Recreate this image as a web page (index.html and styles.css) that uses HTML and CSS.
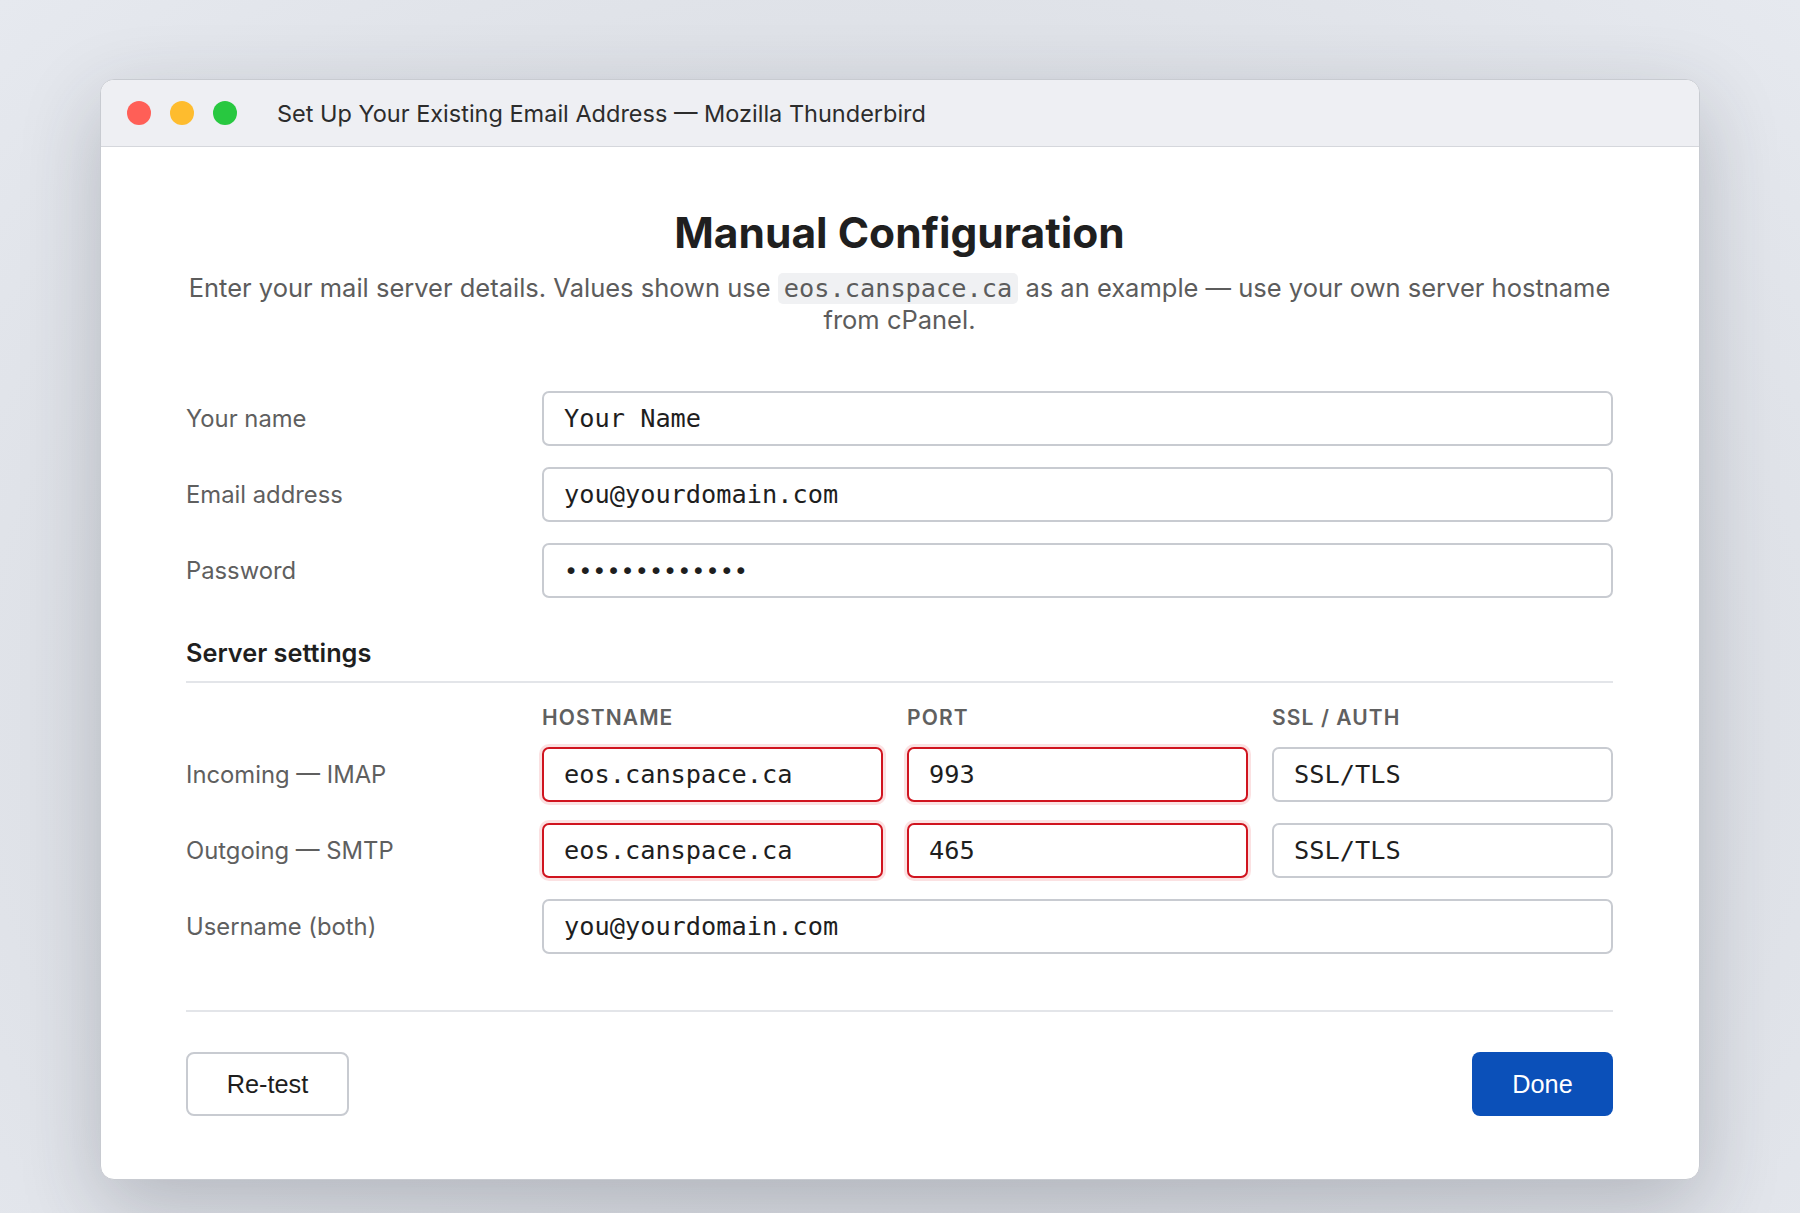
FILE: index.html
```html
<!DOCTYPE html>
<html lang="en">
<head>
    <meta charset="UTF-8">
    <meta name="viewport" content="width=device-width, initial-scale=1.0">
    <title>Set Up Your Existing Email Address — Mozilla Thunderbird</title>
    <link rel="stylesheet" href="styles.css">
</head>
<body>
    <div class="window">
        <div class="titlebar">
            <span class="light red"></span>
            <span class="light yellow"></span>
            <span class="light green"></span>
            <span class="window-title">Set Up Your Existing Email Address — Mozilla Thunderbird</span>
        </div>

        <div class="content">
            <h1>Manual Configuration</h1>
            <p class="intro">Enter your mail server details. Values shown use <code>eos.canspace.ca</code> as an example — use your own server hostname from cPanel.</p>

            <div class="fields">
                <div class="row">
                    <label for="name">Your name</label>
                    <input type="text" id="name" value="Your Name">
                </div>
                <div class="row">
                    <label for="email">Email address</label>
                    <input type="text" id="email" value="you@yourdomain.com">
                </div>
                <div class="row">
                    <label for="password">Password</label>
                    <input type="password" id="password" value="xxxxxxxxxxxxx">
                </div>
            </div>

            <h2>Server settings</h2>

            <div class="fields">
                <div class="row heads">
                    <span></span>
                    <div class="triple">
                        <span>Hostname</span>
                        <span>Port</span>
                        <span>SSL / Auth</span>
                    </div>
                </div>
                <div class="row">
                    <label for="imapHost">Incoming — IMAP</label>
                    <div class="triple">
                        <input type="text" id="imapHost" class="invalid" value="eos.canspace.ca">
                        <input type="text" class="invalid" value="993">
                        <input type="text" value="SSL/TLS">
                    </div>
                </div>
                <div class="row">
                    <label for="smtpHost">Outgoing — SMTP</label>
                    <div class="triple">
                        <input type="text" id="smtpHost" class="invalid" value="eos.canspace.ca">
                        <input type="text" class="invalid" value="465">
                        <input type="text" value="SSL/TLS">
                    </div>
                </div>
                <div class="row">
                    <label for="username">Username (both)</label>
                    <input type="text" id="username" value="you@yourdomain.com">
                </div>
            </div>

            <div class="actions">
                <button type="button" class="secondary">Re-test</button>
                <button type="button" class="primary">Done</button>
            </div>
        </div>
    </div>
</body>
</html>
```

FILE: styles.css
```css
body {
    margin: 0;
    padding-top: 79px;
    min-height: 1213px;
    box-sizing: border-box;
    font-family: Inter, "Noto Sans", sans-serif;
    background: radial-gradient(ellipse at 50% 60%, #cfd2d8 0%, #dcdfe5 55%, #e6e9ef 100%);
}
.window {
    width: 1600px;
    margin: 0 auto;
    box-sizing: border-box;
    background: #fff;
    border: 1px solid #c8cbd1;
    border-radius: 14px;
    overflow: hidden;
    box-shadow: 0 26px 80px rgba(40, 45, 60, 0.24);
}
.titlebar {
    display: flex;
    align-items: center;
    height: 66px;
    padding-left: 26px;
    background: #eeeff3;
    border-bottom: 1px solid #d5d7dc;
}
.light {
    width: 24px;
    height: 24px;
    border-radius: 50%;
    margin-right: 19px;
}
.red { background: #ff5f57; }
.yellow { background: #febc2e; }
.green { background: #28c840; }
.window-title {
    margin-left: 21px;
    font-size: 23.5px;
    color: #2c2c2c;
}
.content {
    padding: 59px 86px 63px 85px;
}
h1 {
    margin: 0;
    text-align: center;
    font-size: 42.5px;
    font-weight: 700;
    line-height: 54px;
    color: #1f1f1f;
}
.intro {
    margin: 12px -20px 0;
    text-align: center;
    font-size: 25.5px;
    line-height: 31px;
    color: #5c5c5c;
}
code {
    font-family: "DejaVu Sans Mono", monospace;
    font-size: 25.3px;
    background: #f0f1f3;
    border-radius: 5px;
    padding: 1px 6px;
}
.fields {
    display: flex;
    flex-direction: column;
    gap: 21px;
    margin-top: 56px;
}
.row {
    display: grid;
    grid-template-columns: 356px 1fr;
    align-items: center;
}
label {
    font-size: 23.8px;
    color: #5f5f5f;
}
input {
    box-sizing: border-box;
    width: 100%;
    height: 55px;
    padding: 0 20px;
    font-family: "DejaVu Sans Mono", monospace;
    font-size: 25.3px;
    color: #1e1e1e;
    background: #fff;
    border: 2px solid #c8cbd1;
    border-radius: 7px;
    outline: none;
}
input[type=password] {
    font-size: 23.5px;
}
input.invalid {
    border-color: #d0141f;
    box-shadow: 0 0 0 3px rgba(230, 40, 50, 0.14);
}
.triple {
    display: grid;
    grid-template-columns: 1fr 1fr 1fr;
    gap: 24px;
}
h2 {
    margin: 40px 0 0;
    padding-bottom: 14px;
    border-bottom: 2px solid #e3e5e9;
    font-size: 25.3px;
    font-weight: 600;
    line-height: 29px;
    color: #1f1f1f;
}
.fields + h2 + .fields {
    margin-top: 22px;
}
.heads {
    margin-bottom: -4px;
}
.heads span {
    font-size: 21px;
    font-weight: 600;
    letter-spacing: 1.1px;
    text-transform: uppercase;
    color: #606060;
}
.actions {
    display: flex;
    justify-content: space-between;
    margin-top: 56px;
    padding-top: 40px;
    border-top: 2px solid #e3e5e9;
}
button {
    height: 64px;
    font-family: "Liberation Sans", Arial, sans-serif;
    font-size: 25.3px;
    border-radius: 8px;
    cursor: pointer;
}
.secondary {
    width: 163px;
    background: #fff;
    color: #1e1e1e;
    border: 2px solid #c8cbd1;
}
.primary {
    width: 141px;
    background: #0b50b9;
    color: #fff;
    border: none;
}
```
